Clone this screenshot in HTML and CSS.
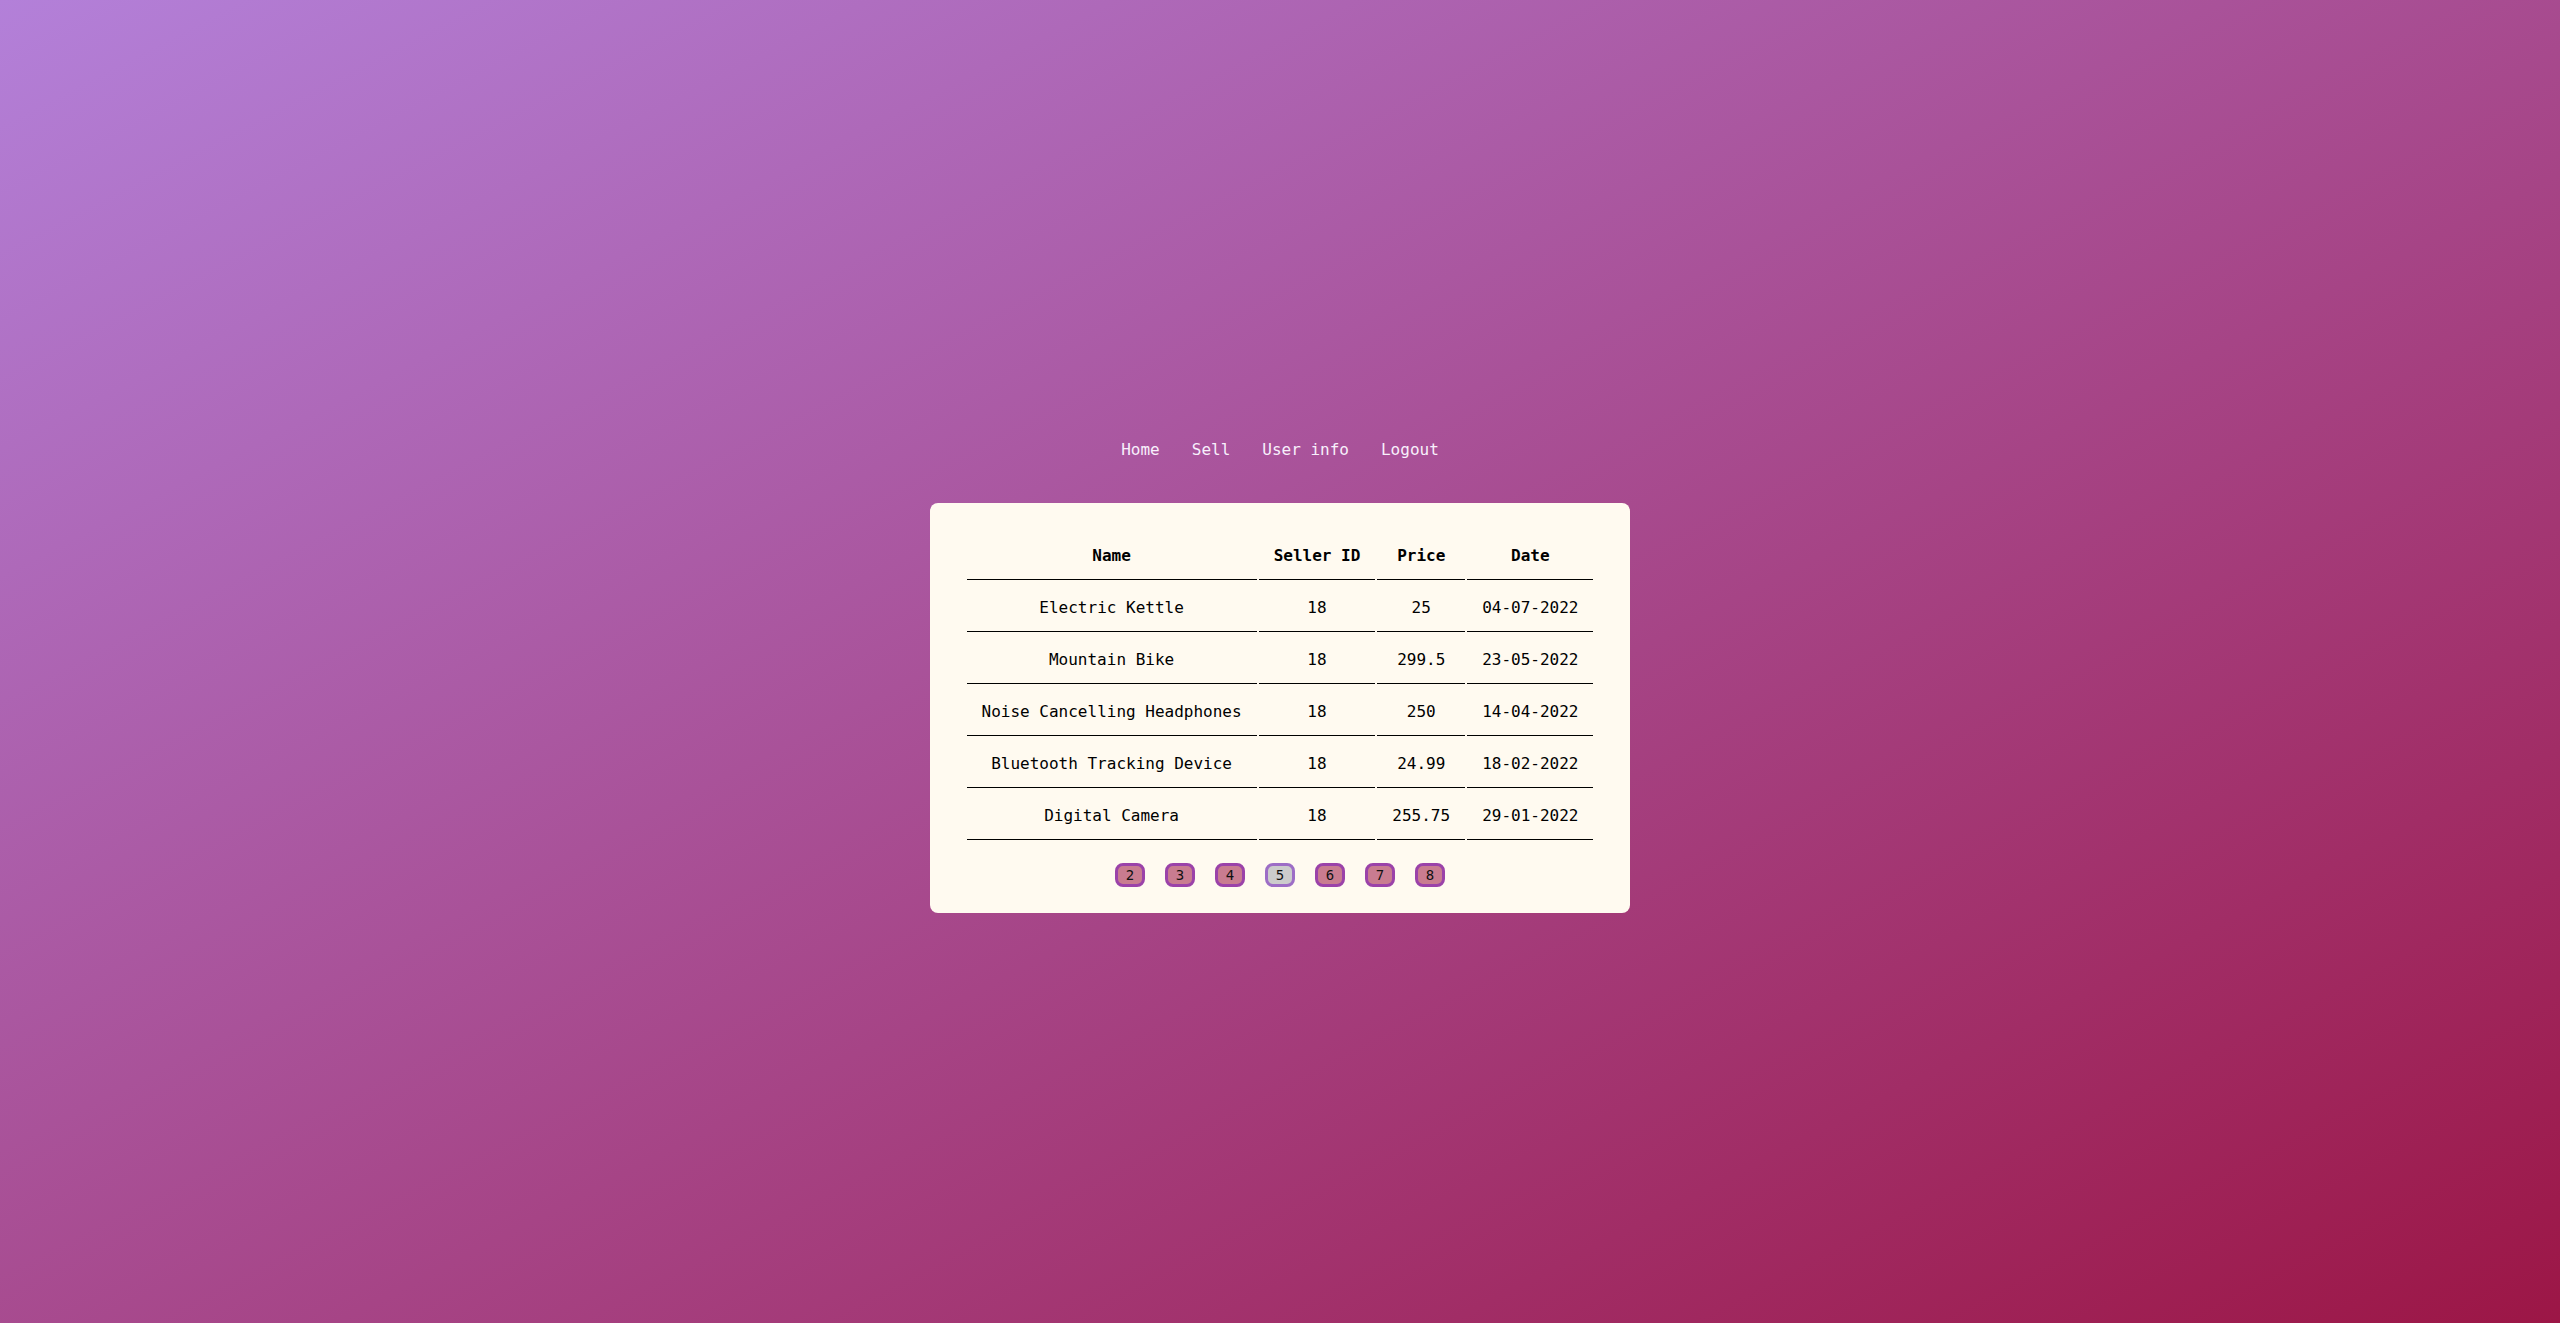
FILE: index.html
```html
<!DOCTYPE html>
<html lang="en">
<head>
<meta charset="utf-8">
<title>Listings</title>
<link rel="stylesheet" href="styles.css">
</head>
<body>
<nav class="nav">
  <a class="nav-link" href="#">Home</a>
  <a class="nav-link" href="#">Sell</a>
  <a class="nav-link" href="#">User info</a>
  <a class="nav-link" href="#">Logout</a>
</nav>
<main class="card">
  <table class="items">
    <thead>
      <tr><th>Name</th><th>Seller ID</th><th>Price</th><th>Date</th></tr>
    </thead>
    <tbody>
      <tr><td>Electric Kettle</td><td>18</td><td>25</td><td>04-07-2022</td></tr>
      <tr><td>Mountain Bike</td><td>18</td><td>299.5</td><td>23-05-2022</td></tr>
      <tr><td>Noise Cancelling Headphones</td><td>18</td><td>250</td><td>14-04-2022</td></tr>
      <tr><td>Bluetooth Tracking Device</td><td>18</td><td>24.99</td><td>18-02-2022</td></tr>
      <tr><td>Digital Camera</td><td>18</td><td>255.75</td><td>29-01-2022</td></tr>
    </tbody>
  </table>
  <div class="pager">
    <button class="page">2</button>
    <button class="page">3</button>
    <button class="page">4</button>
    <button class="page page-current">5</button>
    <button class="page">6</button>
    <button class="page">7</button>
    <button class="page">8</button>
  </div>
</main>
</body>
</html>
```

FILE: styles.css
```css
html, body {
  margin: 0;
  padding: 0;
}
body {
  min-height: 100vh;
  display: flex;
  flex-direction: column;
  align-items: center;
  justify-content: center;
  background: linear-gradient(to bottom right, #b380d9, #9c1646);
  font-family: "DejaVu Sans Mono", monospace;
  font-size: 16px;
  color: #000;
}
.nav {
  display: flex;
  gap: 32px;
  padding: 30px 0 28px;
  line-height: 20px;
}
.nav-link {
  color: #f8f0fc;
  text-decoration: none;
}
.card {
  margin-top: 15px;
  background: #fffaf0;
  border-radius: 8px;
  padding: 25px 35px 26px;
}
.items {
  border-collapse: separate;
  border-spacing: 2px;
}
.items th,
.items td {
  padding: 16px 15px 14px;
  line-height: 19px;
  text-align: center;
  border-bottom: 1px solid #000;
  white-space: nowrap;
}
.items th {
  font-weight: bold;
}
.pager {
  display: flex;
  justify-content: center;
  gap: 20px;
  margin-top: 21px;
}
.page {
  width: 30px;
  height: 24px;
  padding: 0;
  box-sizing: border-box;
  border: 3px solid #9b42a9;
  border-radius: 8px;
  background: #c97c90;
  color: #111;
  font-family: "DejaVu Sans Mono", monospace;
  font-size: 14px;
  line-height: 18px;
}
.page-current {
  background: #cccccc;
  border-color: #9d6dc6;
}
```
